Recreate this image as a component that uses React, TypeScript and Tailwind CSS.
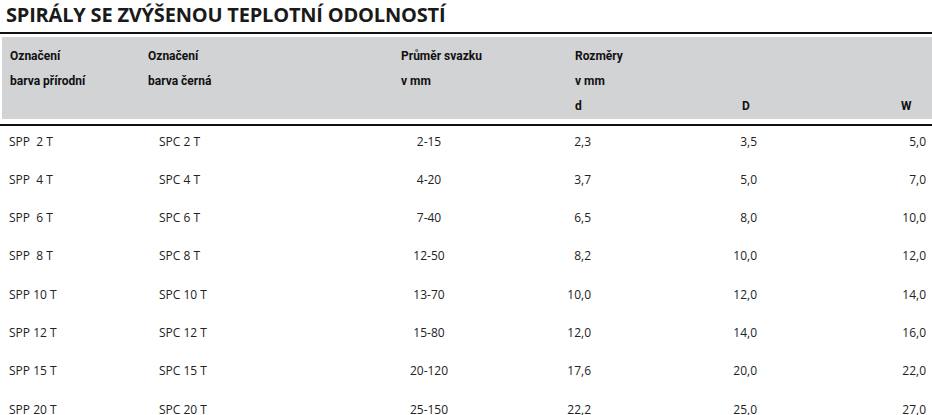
import React from "react";

const rows = [
  ["SPP  2 T", "SPC 2 T", "2-15", "2,3", "3,5", "5,0"],
  ["SPP  4 T", "SPC 4 T", "4-20", "3,7", "5,0", "7,0"],
  ["SPP  6 T", "SPC 6 T", "7-40", "6,5", "8,0", "10,0"],
  ["SPP  8 T", "SPC 8 T", "12-50", "8,2", "10,0", "12,0"],
  ["SPP 10 T", "SPC 10 T", "13-70", "10,0", "12,0", "14,0"],
  ["SPP 12 T", "SPC 12 T", "15-80", "12,0", "14,0", "16,0"],
  ["SPP 15 T", "SPC 15 T", "20-120", "17,6", "20,0", "22,0"],
  ["SPP 20 T", "SPC 20 T", "25-150", "22,2", "25,0", "27,0"],
];

const hdr = "font-['Roboto','Liberation_Sans',sans-serif] font-bold text-[12px] leading-none text-[#111]";

export default function App() {
  return (
    <div className="w-[932px] h-[415px] bg-white overflow-hidden font-['Open_Sans',sans-serif]">
      <h1 className="pl-[6px] pt-[3px] h-[32px] text-[20px] leading-[24px] font-bold text-[#1a1a1a] font-['Open_Sans',sans-serif] tracking-[-0.2px]">
        SPIRÁLY SE ZVÝŠENOU TEPLOTNÍ ODOLNOSTÍ
      </h1>
      <div className="h-[2px] bg-[#111]" />
      <div className="mt-[3px] ml-[2px] h-[82px] bg-[#d2d3d5] pl-[8px] pt-[13px]">
        <div className={`flex ${hdr}`}>
          <div className="w-[138px] flex flex-col gap-[13px]">
            <span>Označení</span>
            <span>barva přírodní</span>
          </div>
          <div className="w-[253px] flex flex-col gap-[13px]">
            <span>Označení</span>
            <span>barva černá</span>
          </div>
          <div className="w-[174px] flex flex-col gap-[13px]">
            <span>Průměr svazku</span>
            <span>v mm</span>
          </div>
          <div className="flex flex-col gap-[13px]">
            <span>Rozměry</span>
            <span>v mm</span>
            <div className="flex">
              <span className="w-[167px]">d</span>
              <span className="w-[159px]">D</span>
              <span>W</span>
            </div>
          </div>
        </div>
      </div>
      <div className="mt-[5px] h-[1.5px] bg-[#111]" />
      <div className="pt-[9px] text-[12px] leading-[14px] text-[#222] font-['Open_Sans',sans-serif]">
        {rows.map((r, i) => (
          <div key={i} className="flex h-[38.3px] items-start pl-[9px]">
            <span className="w-[150px] whitespace-pre">{r[0]}</span>
            <span className="w-[230px] whitespace-pre">{r[1]}</span>
            <span className="w-[80px] text-center">{r[2]}</span>
            <span className="w-[122px] text-right">{r[3]}</span>
            <span className="w-[166px] text-right">{r[4]}</span>
            <span className="w-[169px] text-right">{r[5]}</span>
          </div>
        ))}
      </div>
    </div>
  );
}
